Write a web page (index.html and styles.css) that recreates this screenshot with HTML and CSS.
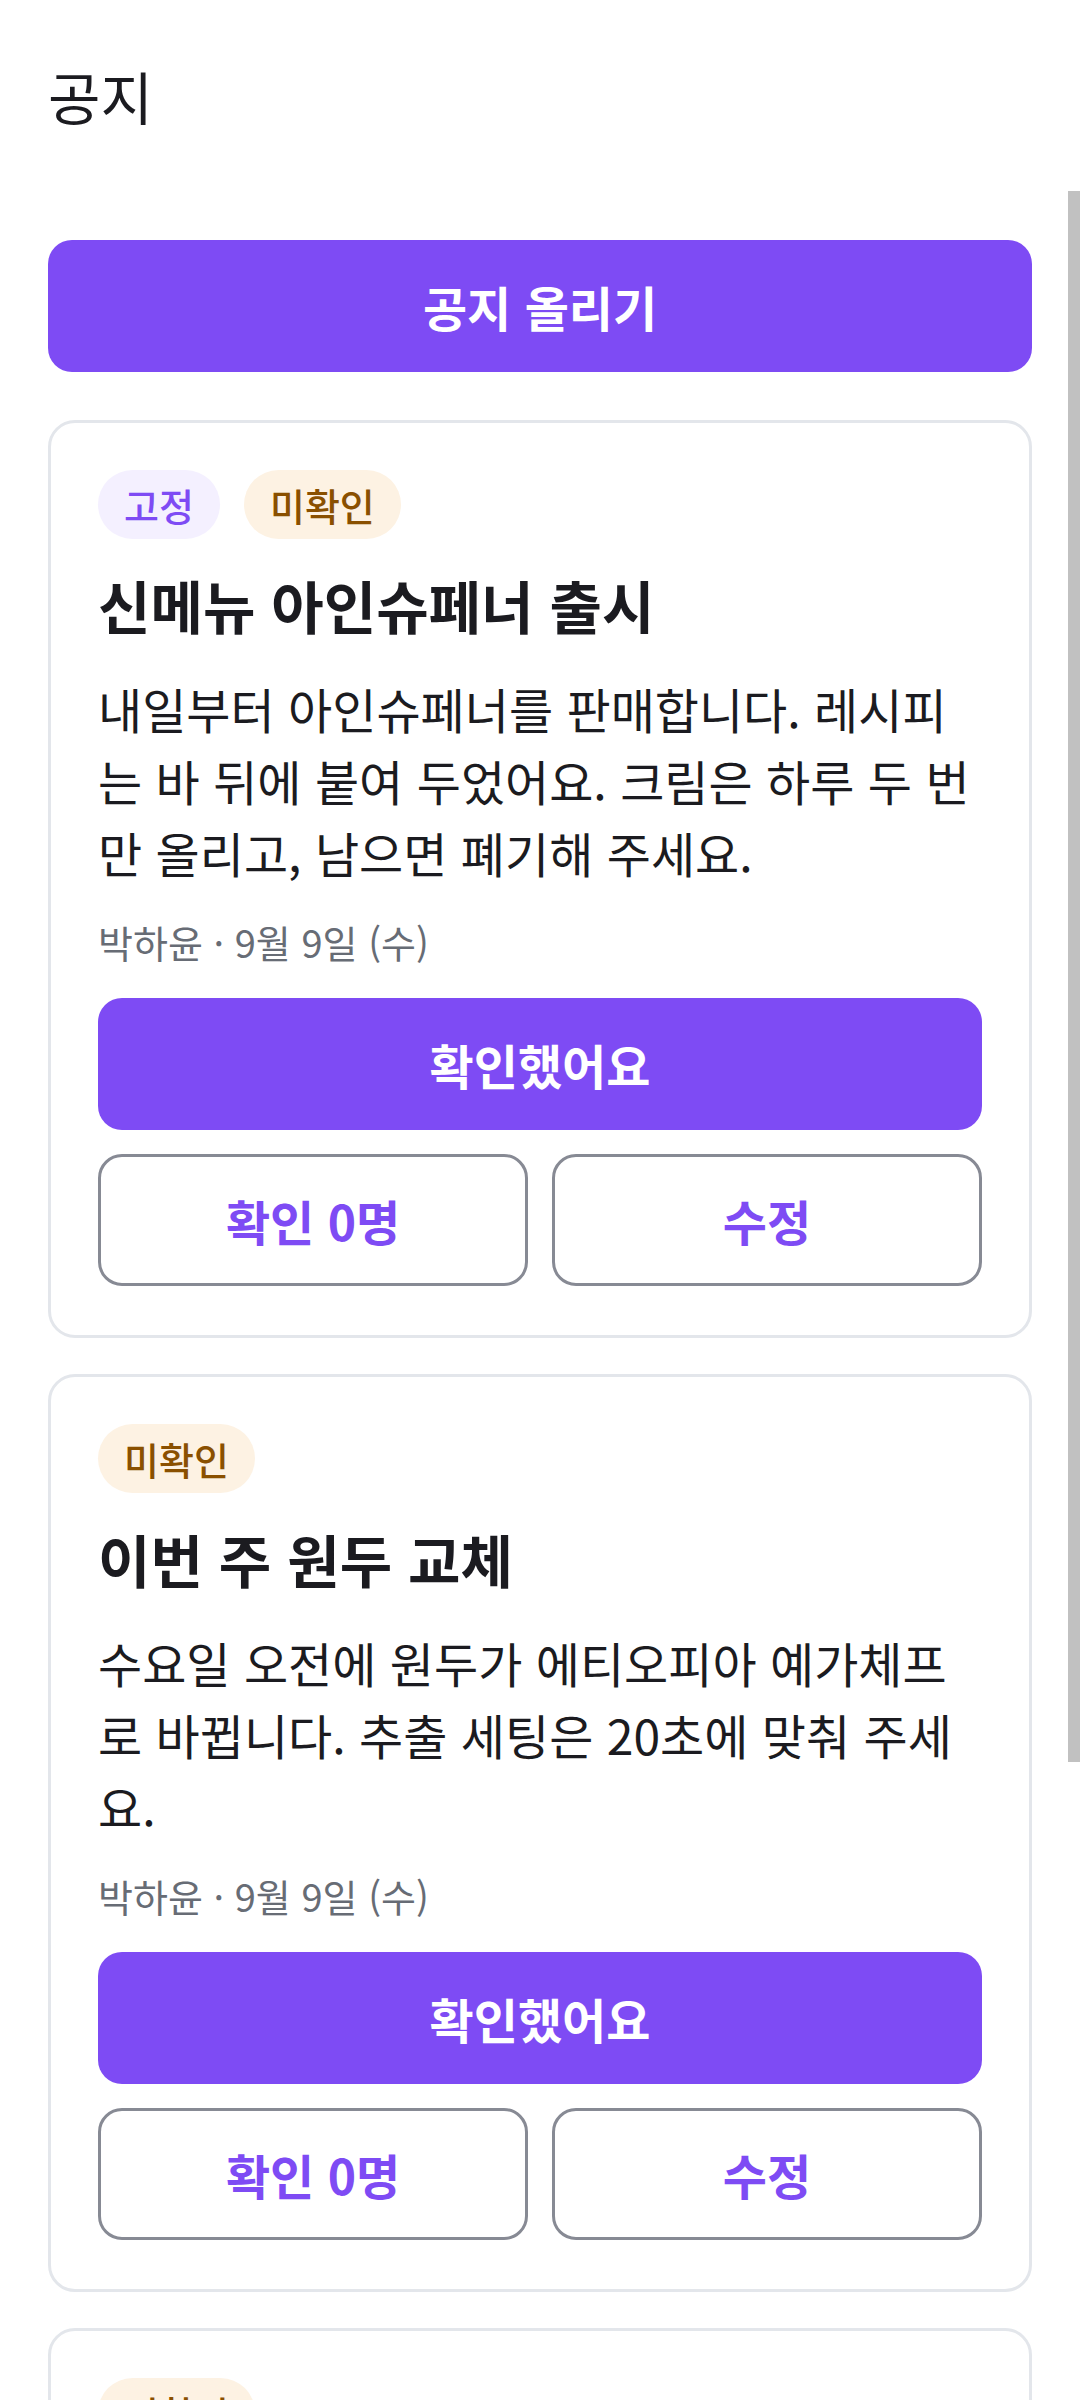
FILE: index.html
```html
<!DOCTYPE html>
<html lang="ko">
<head>
  <meta charset="utf-8">
  <link rel="stylesheet" href="styles.css">
</head>
<body>

<div class="app">
  <!-- Шапка -->
  <header class="top-bar">
    <h1 class="top-title">공지</h1>
  </header>

  <!-- Лента объявлений -->
  <main class="feed">
    <button class="btn btn-primary btn-post">공지 올리기</button>

    <article class="notice-card">
      <div class="tags">
        <span class="tag tag-pinned">고정</span>
        <span class="tag tag-unread">미확인</span>
      </div>
      <h2 class="notice-title">신메뉴 아인슈페너 출시</h2>
      <p class="notice-body">내일부터 아인슈페너를 판매합니다. 레시피는 바 뒤에 붙여 두었어요. 크림은 하루 두 번만 올리고, 남으면 폐기해 주세요.</p>
      <div class="notice-meta">박하윤 · 9월 9일 (수)</div>
      <button class="btn btn-primary btn-confirm">확인했어요</button>
      <div class="btn-row">
        <button class="btn btn-outline">확인 0명</button>
        <button class="btn btn-outline">수정</button>
      </div>
    </article>

    <article class="notice-card">
      <div class="tags">
        <span class="tag tag-unread">미확인</span>
      </div>
      <h2 class="notice-title">이번 주 원두 교체</h2>
      <p class="notice-body">수요일 오전에 원두가 에티오피아 예가체프로 바뀝니다. 추출 세팅은 20초에 맞춰 주세요.</p>
      <div class="notice-meta">박하윤 · 9월 9일 (수)</div>
      <button class="btn btn-primary btn-confirm">확인했어요</button>
      <div class="btn-row">
        <button class="btn btn-outline">확인 0명</button>
        <button class="btn btn-outline">수정</button>
      </div>
    </article>

    <article class="notice-card">
      <div class="tags">
        <span class="tag tag-unread">미확인</span>
      </div>
      <h2 class="notice-title">마감 청소 순서 변경</h2>
      <p class="notice-body">이번 주부터 마감 청소는 머신 세척을 먼저 하고, 바닥 청소는 마지막에 해 주세요. 체크리스트는 냉장고 옆에 있어요.</p>
      <div class="notice-meta">박하윤 · 9월 8일 (화)</div>
      <button class="btn btn-primary btn-confirm">확인했어요</button>
      <div class="btn-row">
        <button class="btn btn-outline">확인 0명</button>
        <button class="btn btn-outline">수정</button>
      </div>
    </article>
  </main>

  <!-- Ползунок прокрутки -->
  <div class="scroll-thumb"></div>
</div>

</body>
</html>
```

FILE: styles.css
```css
/* Общие стили */
html, body {
  margin: 0;
  height: 100%;
}
body {
  font-family: "Noto Sans CJK KR", "Noto Sans", sans-serif;
  background: #fff;
  color: #1b1b20;
  overflow: hidden;
}
.app {
  position: relative;
  height: 100vh;
  display: flex;
  flex-direction: column;
}

/* Шапка */
.top-bar {
  height: 192px;
  flex-shrink: 0;
  box-sizing: border-box;
  padding: 59px 48px 0;
}
.top-title {
  margin: 0;
  font-size: 57px;
  font-weight: 400;
  line-height: 72px;
}

/* Лента */
.feed {
  flex: 1;
  overflow: hidden;
  padding: 48px 48px 48px;
}
.scroll-thumb {
  position: absolute;
  top: 191px;
  right: 0;
  width: 12px;
  height: 1571px;
  background: #c1c1c1;
}

/* Кнопки */
.btn {
  display: block;
  width: 100%;
  height: 132px;
  box-sizing: border-box;
  border-radius: 24px;
  font-family: inherit;
  font-size: 48px;
  font-weight: 700;
  line-height: 1;
  cursor: pointer;
}
.btn-primary {
  background: #7e4bf4;
  color: #fff;
  border: none;
}
.btn-outline {
  background: #fff;
  color: #7e4bf4;
  border: 3px solid #878a94;
}
.btn-post {
  margin-bottom: 48px;
}
.btn-confirm {
  margin-top: 28px;
}
.btn-row {
  display: grid;
  grid-template-columns: 1fr 1fr;
  gap: 24px;
  margin-top: 24px;
}

/* Карточка объявления */
.notice-card {
  border: 3px solid #e3e6eb;
  border-radius: 27px;
  padding: 47px 47px 49px;
}
.notice-card + .notice-card {
  margin-top: 36px;
}
.tags {
  display: flex;
  gap: 24px;
  margin-bottom: 29px;
}
.tag {
  font-size: 38px;
  font-weight: 500;
  line-height: 45px;
  padding: 12px 26px;
  border-radius: 40px;
}
.tag-pinned {
  background: #f4f0ff;
  color: #7e4bf4;
}
.tag-unread {
  background: #fdf2e3;
  color: #8a5000;
}
.notice-title {
  margin: 0 0 32px;
  font-size: 57px;
  font-weight: 700;
  line-height: 72px;
}
.notice-body {
  margin: 0;
  font-size: 48px;
  line-height: 72px;
}
.notice-meta {
  margin-top: 26px;
  font-size: 38px;
  line-height: 56px;
  color: #676c75;
}
```
